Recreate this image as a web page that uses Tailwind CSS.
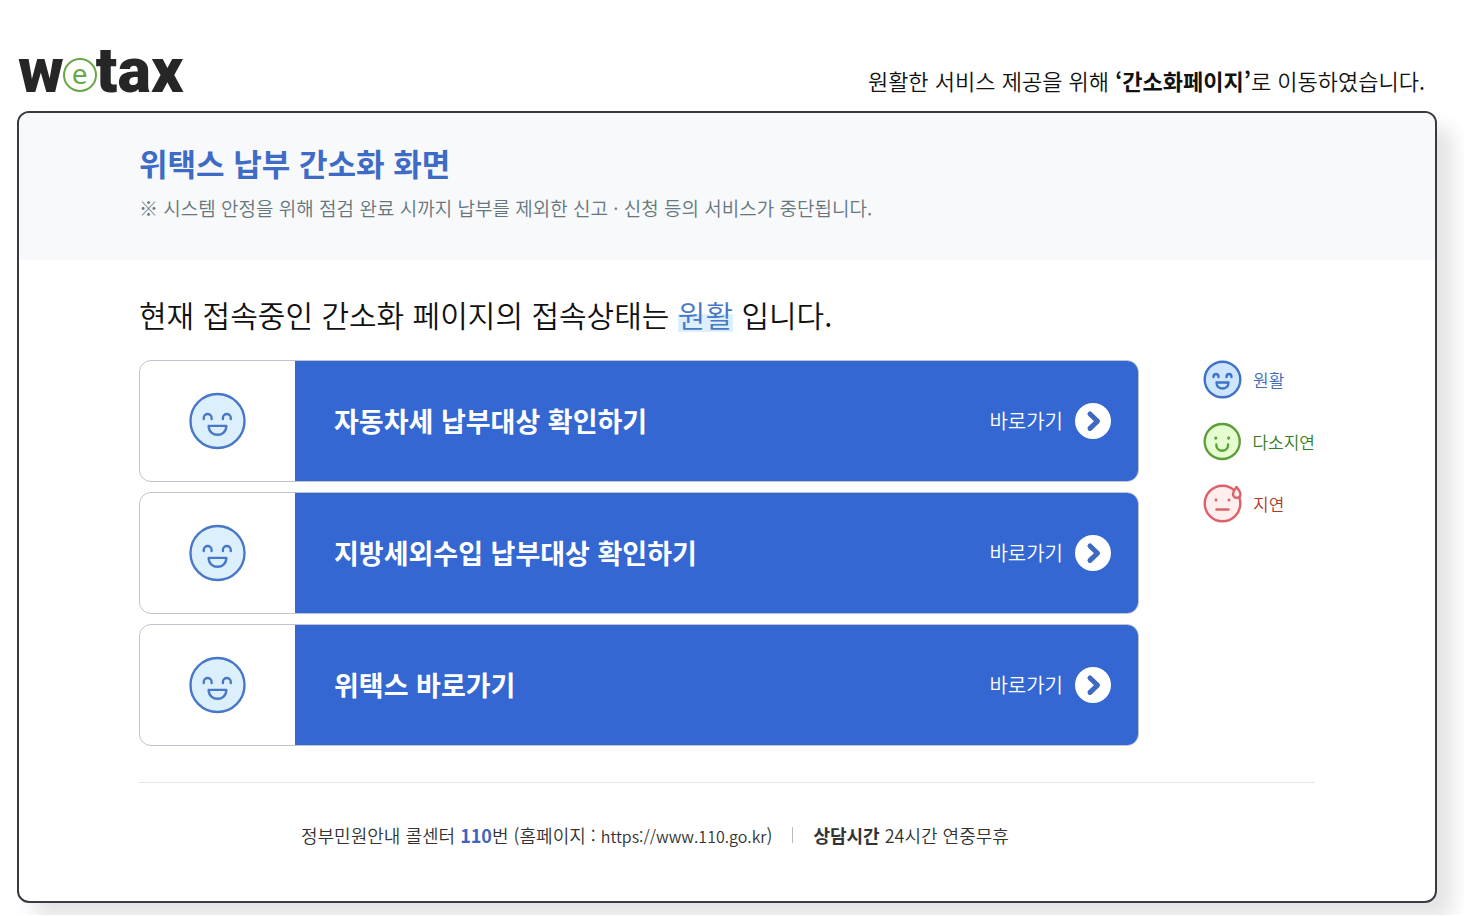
<!DOCTYPE html>
<html lang="ko">
  <head>
    <meta charset="UTF-8" />
    <meta name="viewport" content="width=device-width, initial-scale=1.0" />
    <title>위택스 납부 간소화</title>
    <script src="https://cdn.jsdelivr.net/npm/@tailwindcss/browser@4"></script>
  </head>
  <body class="bg-white pt-12 pl-[17px] pr-[27px] pb-3 font-['Noto_Sans_CJK_KR',sans-serif] font-[350] text-[#111]">
    <!-- Shared icons -->
    <svg class="hidden">
      <symbol id="face-good" viewBox="0 0 58 58">
        <circle cx="29" cy="29" r="27.5" fill="#dbeffd" stroke="#4777c6" stroke-width="2.4" />
        <g fill="none" stroke="#4777c6" stroke-width="2.4" stroke-linecap="round" stroke-linejoin="round">
          <path d="M15 27v-1c0-5.500 8-5.500 8 0v1M34.500 27v-1c0-5.500 8-5.500 8 0v1" />
          <path d="M20 34h18c0 12-18 12-18 0z" />
        </g>
      </symbol>
      <symbol id="arrow" viewBox="0 0 36 36">
        <circle cx="18" cy="18" r="18" fill="#fff" />
        <path d="M15 11l7.500 7.200-7.500 7.200" fill="none" stroke="#3d69c2" stroke-width="5" stroke-linecap="round" stroke-linejoin="round" />
      </symbol>
    </svg>

    <!-- Header -->
    <header class="flex justify-between pl-px pr-3">
      <h1 class="flex items-center h-[63px] pb-[18px] font-['Roboto',sans-serif] text-[63px] leading-[50px] font-black text-[#262626]">
        <span>w</span>
        <span class="-mx-px mt-2 w-[34px] h-[34px] rounded-full border-2 border-[#69a847] bg-white flex items-center justify-center pb-1 font-['Noto_Sans',sans-serif] text-[28px] leading-8 font-normal text-[#69a847]">e</span>
        <span>tax</span>
      </h1>
      <p class="pt-4 text-[22px] leading-8">
        원활한 서비스 제공을 위해 <strong class="font-bold">‘간소화페이지’</strong>로 이동하였습니다.
      </p>
    </header>

    <main class="border-2 border-[#3a3b41] rounded-xl shadow-[16px_16px_20px_rgba(0,0,0,0.11)]">
      <!-- Title -->
      <div class="bg-[#f8f9fb] rounded-t-[10px] px-[120px] pt-[29px] pb-9">
        <h2 class="text-[31px] leading-[42px] font-bold text-[#3d6bc5]">위택스 납부 간소화 화면</h2>
        <p class="mt-2 text-[19px] leading-8 text-[#66767d]">
          ※ 시스템 안정을 위해 점검 완료 시까지 납부를 제외한 신고 · 신청 등의 서비스가 중단됩니다.
        </p>
      </div>

      <div class="px-[120px] pt-[30px]">
        <p class="text-[30px] leading-12">
          현재 접속중인 간소화 페이지의 접속상태는
          <em class="not-italic text-[#4777c6] bg-linear-to-t from-[#dbeffd] from-50% to-transparent to-50% leading-9 inline-block">원활</em>
          입니다.
        </p>

        <div class="flex gap-16 mt-[22px] pb-9 border-b border-[#e5e5e5]">
          <!-- Service links -->
          <div class="flex-1 flex flex-col gap-[10px]">
            <a href="#" class="flex h-[122px] border border-[#bfc3cc] rounded-xl overflow-hidden">
              <span class="w-[155px] flex items-center justify-center">
                <svg class="w-[57px] h-[58px]"><use href="#face-good" /></svg>
              </span>
              <span class="flex-1 flex items-center bg-[#3567d3] pl-[39px] pr-[27px] text-white">
                <span class="flex-1 text-[27px] leading-10 font-bold">자동차세 납부대상 확인하기</span>
                <span class="mr-3 text-xl">바로가기</span>
                <svg class="w-9 h-9"><use href="#arrow" /></svg>
              </span>
            </a>
            <a href="#" class="flex h-[122px] border border-[#bfc3cc] rounded-xl overflow-hidden">
              <span class="w-[155px] flex items-center justify-center">
                <svg class="w-[57px] h-[58px]"><use href="#face-good" /></svg>
              </span>
              <span class="flex-1 flex items-center bg-[#3567d3] pl-[39px] pr-[27px] text-white">
                <span class="flex-1 text-[27px] leading-10 font-bold">지방세외수입 납부대상 확인하기</span>
                <span class="mr-3 text-xl">바로가기</span>
                <svg class="w-9 h-9"><use href="#arrow" /></svg>
              </span>
            </a>
            <a href="#" class="flex h-[122px] border border-[#bfc3cc] rounded-xl overflow-hidden">
              <span class="w-[155px] flex items-center justify-center">
                <svg class="w-[57px] h-[58px]"><use href="#face-good" /></svg>
              </span>
              <span class="flex-1 flex items-center bg-[#3567d3] pl-[39px] pr-[27px] text-white">
                <span class="flex-1 text-[27px] leading-10 font-bold">위택스 바로가기</span>
                <span class="mr-3 text-xl">바로가기</span>
                <svg class="w-9 h-9"><use href="#arrow" /></svg>
              </span>
            </a>
          </div>

          <!-- Legend -->
          <ul class="w-28 flex flex-col gap-[23px] text-[17px] leading-6 whitespace-nowrap">
            <li class="flex items-center gap-[11px] text-[#3d6bb8]">
              <svg class="w-[39px] h-[39px]" viewBox="0 0 39 39" fill="none" stroke="#3f72c8" stroke-width="2.4" stroke-linecap="round" stroke-linejoin="round">
                <circle cx="19.500" cy="19.500" r="17.800" fill="#cde6fe" />
                <path d="M10.500 17c0-4 5-4 5 0M23.500 17c0-4 5-4 5 0M13.500 22.500h12c0 8-12 8-12 0z" />
              </svg>
              원활
            </li>
            <li class="flex items-center gap-[11px] text-[#35801c]">
              <svg class="w-[39px] h-[39px]" viewBox="0 0 39 39" fill="none" stroke="#5c9f38" stroke-width="2.4" stroke-linecap="round">
                <circle cx="19.500" cy="19.500" r="17.800" fill="#e6fdd2" />
                <path d="M13.500 22.500c0 8.500 12 8.500 12 0" />
                <path d="M13 16v.1M26 16v.1" stroke-width="3" />
              </svg>
              다소지연
            </li>
            <li class="flex items-center gap-[11px] text-[#b03a22]">
              <svg class="w-[39px] h-[39px]" viewBox="0 0 39 39" fill="none" stroke="#dd6169" stroke-width="2.4" stroke-linecap="round" stroke-linejoin="round">
                <circle cx="19.500" cy="19.500" r="17.800" fill="#feeeee" />
                <path d="M13.500 25.500h12" />
                <path d="M13 16v.1M26 16v.1" stroke-width="3" />
                <path d="M33.500 3c-2 3-3.500 4.500-3.500 7 0 5 7.500 5 7.500 0 0-2.500-2-4-4-7z" fill="#feeeee" />
              </svg>
              지연
            </li>
          </ul>
        </div>

        <!-- Contact -->
        <footer class="flex items-center pl-[162px] pt-9 pb-[50px] text-lg leading-8 text-[#333]">
          <p>
            정부민원안내 콜센터 <strong class="font-bold text-[#3f63c0]">110</strong>번 (홈페이지 :
            <a href="https://www.110.go.kr" class="text-base">https://www.110.go.kr</a>)
          </p>
          <span class="mx-5 w-px h-4 bg-[#bbb]"></span>
          <p><strong class="font-bold">상담시간</strong> 24시간 연중무휴</p>
        </footer>
      </div>
    </main>
  </body>
</html>
